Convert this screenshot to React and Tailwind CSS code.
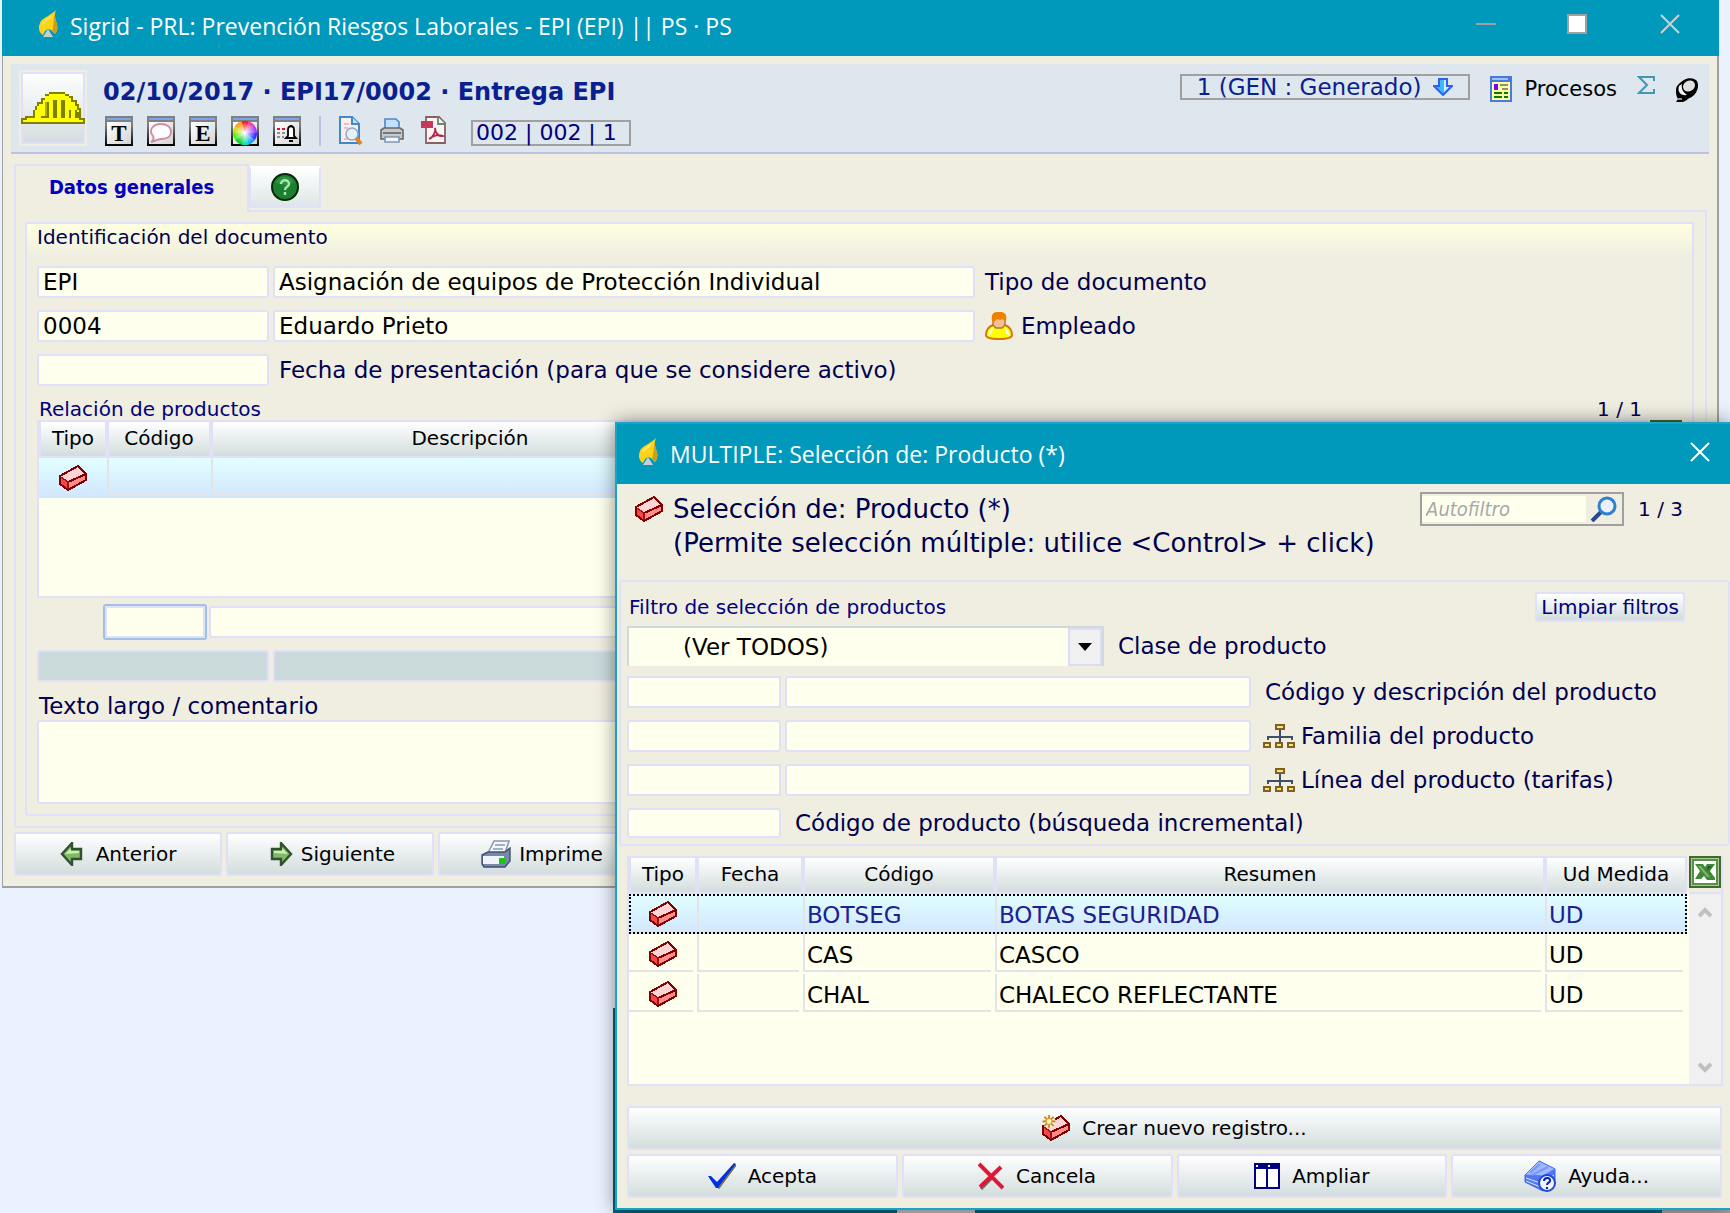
import React, {useState} from "react";

const products = [
    {code: "BOTSEG", summary: "BOTAS SEGURIDAD", unit: "UD"},
    {code: "CAS", summary: "CASCO", unit: "UD"},
    {code: "CHAL", summary: "CHALECO REFLECTANTE", unit: "UD"},
];

const fieldClass = "h-8 border-2 border-[#e0e0f8] rounded-[3px] bg-[#ffffee] px-1 text-[23px] text-black outline-none";
const buttonClass = "flex items-center justify-center border-2 border-[#e0e0f8] rounded-[3px] bg-linear-to-b from-white to-[#d3dddd] text-[20px] text-black";
const headClass = "h-[38px] p-0 pb-[2px] border-x-2 border-y-2 border-[#e0e0f8] bg-linear-to-b from-white to-[#d3dddd] text-[20px] font-normal text-black";
const rowSelected = "bg-linear-to-b from-[#e2ffff] to-[#d0e6fe] text-[#202090]";

/* ---------- icons ---------- */

const FlameIcon = () => (
    <svg className="w-5 h-7 shrink-0" viewBox="0 0 20 28" aria-hidden="true">
        <path d="M10 19L15 27H5Z" fill="#c9ced2"/>
        <path d="M18 0C16 5 17 8 19 14C20 18 19 22 17 24L13 20L10 19L7 21L5 25C0 22 0 16 3 11C7 7 13 5 18 0Z" fill="#ffd21a"/>
        <path d="M18 0C16 5 17 8 19 14C20 18 19 22 17 24L14 21C16 16 15 8 18 0Z" fill="#c8a020"/>
        <path d="M14 5C10 8 5 10 4 15L8 12C11 10 13 8 14 5Z" fill="#ffe870"/>
    </svg>
);

const EraserIcon = ({isNew}) => (
    <svg className="w-7 h-[26px] shrink-0" viewBox="0 0 14 13" shapeRendering="crispEdges" aria-hidden="true">
        <path d="M.5 5.5L9.5 .5L13.5 4.5L4.5 8.5Z" fill="#ffd4d4"/>
        <path d="M.5 5.5L4.5 8.5V12.5L.5 9.5Z" fill="#f04848"/>
        <path d="M4.5 8.5L13.5 4.5V7.5L4.5 12.5Z" fill="#ff8c8c"/>
        <path d="M.5 5.5L9.5 .5L13.5 4.5V7.5L4.5 12.5L.5 9.5ZM4.5 8.5L13.5 4.5" fill="none" stroke="#800000"/>
        <path d="M1 6L4.5 8.5V12" fill="none" stroke="#a01010" strokeWidth=".6"/>
        {isNew && (
            <g shapeRendering="auto">
                <circle cx="3.5" cy="3.2" r="3.2" fill="#f0eee1"/>
                <path d="M3.5 0V6.4M.3 3.2H6.7M1.2 .9L5.8 5.5M5.8 .9L1.2 5.5" stroke="#c87810" strokeWidth=".8"/>
                <circle cx="3.5" cy="3.2" r="1.5" fill="#fff8b0" stroke="#d89020" strokeWidth=".5"/>
            </g>
        )}
    </svg>
);

const HelmetIcon = () => (
    <svg className="w-16 h-8" viewBox="0 0 32 16" shapeRendering="crispEdges" aria-hidden="true">
        <path d="M0 16V13H2V12H6V9H7V7H8V5H10V3H12V1H14V0H22V1H24V2H26V4H28V6H29V8H30V13H32V16Z" fill="#808000"/>
        <path d="M1 15V14H3V13H7V9H8V7H9V6H11V4H12V2H14V1H22V2H24V3H25V5H27V7H28V9H29V14H31V15Z" fill="#ff0"/>
        <path d="M9 12H13V5H12V12Z" fill="#b0b000"/>
        <path d="M10 12H14V13H10ZM13 5H14V13H13ZM16 4H18V13H16ZM20 4H22V13H20ZM24 9H25V13H24ZM27 9H28V10H29V13H27Z" fill="#808000"/>
    </svg>
);

const ToolFrame = ({children}) => (
    <svg className="w-7 h-[30px]" viewBox="0 0 28 30" aria-hidden="true">
        <defs>
            <linearGradient id="toolbg" x1="0" y1="0" x2="1" y2="1">
                <stop offset="0" stopColor="#fff"/>
                <stop offset="1" stopColor="#d4d4d4"/>
            </linearGradient>
            <linearGradient id="toolline" x1="0" y1="0" x2="0" y2="1">
                <stop offset=".3" stopColor="#808080"/>
                <stop offset="1" stopColor="#000"/>
            </linearGradient>
        </defs>
        <rect width="28" height="30" fill="url(#toolline)"/>
        <rect x="2" y="2" width="24" height="2" fill="#78a4f0"/>
        <rect x="2" y="6" width="24" height="22" fill="url(#toolbg)"/>
        {children}
    </svg>
);

const TextToolIcon = ({letter}) => (
    <ToolFrame>
        <text x="14" y="25" textAnchor="middle" fontFamily="Liberation Serif, serif" fontWeight="bold" fontSize="23">{letter}</text>
    </ToolFrame>
);

const CommentIcon = () => (
    <ToolFrame>
        <path d="M14 8C20 8 24 11 24 16C24 21 19 23 14 23C11 23 9 25 4 26C7 24 7 22 6 20C1 14 6 8 14 8Z" fill="#fff" stroke="#d08c9c" strokeWidth="1.8"/>
    </ToolFrame>
);

const wheel = ["#f02020", "#f040b0", "#a040ff", "#3030ff", "#10a0ff", "#10e0b0", "#10d020", "#50f010", "#c0e010", "#ffa010"];

const ColorIcon = () => (
    <ToolFrame>
        <defs>
            <radialGradient id="wheelwhite">
                <stop offset="0" stopColor="#fff"/>
                <stop offset="1" stopColor="#fff" stopOpacity="0"/>
            </radialGradient>
        </defs>
        {wheel.map((color, i) => (
            <path key={color} d="M14 17L10 5.5A12 12 0 0 1 18 5.5Z" fill={color} transform={`rotate(${i * 36} 14 17)`}/>
        ))}
        <circle cx="14" cy="17" r="11" fill="url(#wheelwhite)"/>
    </ToolFrame>
);

const BellIcon = () => (
    <ToolFrame>
        <path d="M4 13H7M9 13H12" stroke="#e01030" strokeWidth="2"/>
        <path d="M4 17H7M9 17H12M4 21H7M9 21H11" stroke="#909090" strokeWidth="2"/>
        <path d="M13 22L15 20V14C15 9 21 9 21 14V20L23 22Z" fill="#fff" stroke="#000" strokeWidth="1.8"/>
        <path d="M16 25H20M18 9V11" stroke="#000" strokeWidth="1.8"/>
    </ToolFrame>
);

const PreviewIcon = () => (
    <svg className="w-6 h-[30px]" viewBox="0 0 24 30" aria-hidden="true">
        <path d="M1 1H13L20 8V27H1Z" fill="#fbeef0" stroke="#4088c8" strokeWidth="2"/>
        <path d="M13 1V8H20" fill="#c8e0f8" stroke="#4088c8" strokeWidth="2"/>
        <path d="M5 8H10M5 12H9M5 23H9" stroke="#e0b0b8" strokeWidth="1.5"/>
        <circle cx="13" cy="18" r="6" fill="#e4f0fa" stroke="#98a8c0" strokeWidth="1.6"/>
        <path d="M17 22L22 28" stroke="#d88828" strokeWidth="4"/>
    </svg>
);

const PrinterIcon = () => (
    <svg className="w-6 h-[26px]" viewBox="0 0 24 26" aria-hidden="true">
        <path d="M5 12V1H16L19 4V12Z" fill="#c4e0fa" stroke="#4888cc" strokeWidth="1.6"/>
        <path d="M1 12L4 10H20L23 12V21H1Z" fill="#c8c8c8" stroke="#686868" strokeWidth="1.6"/>
        <path d="M3 15H21" stroke="#787878" strokeWidth="2"/>
        <path d="M5 19H19V24H5Z" fill="#f4f8fc" stroke="#7898b8" strokeWidth="1.6"/>
    </svg>
);

const PdfIcon = () => (
    <svg className="w-[26px] h-[30px]" viewBox="0 0 26 30" aria-hidden="true">
        <path d="M5 1H18L24 7V27H5Z" fill="#fcf4f4" stroke="#886060" strokeWidth="1.8"/>
        <path d="M17 1V8H24" fill="#f4f8f4" stroke="#688868" strokeWidth="1.8"/>
        <rect y="5" width="12" height="7" fill="#c83858"/>
        <path d="M8 23C12 22 15 15 14 12C14 17 18 21 22 20C17 18 12 20 8 23Z" fill="none" stroke="#b02848" strokeWidth="1.8"/>
    </svg>
);

const DownArrowIcon = () => (
    <svg className="w-5 h-[18px]" viewBox="0 0 20 18" aria-hidden="true">
        <path d="M6 1H14V8H19L10 17L1 8H6Z" fill="#40b8ff" stroke="#3060f0" strokeWidth="2"/>
        <path d="M11 2H13V9H16L11 14Z" fill="#c8f4ff"/>
    </svg>
);

const ProcessIcon = () => (
    <svg className="w-[22px] h-[26px]" viewBox="0 0 11 13" shapeRendering="crispEdges" aria-hidden="true">
        <rect width="11" height="13" fill="#4878e0"/>
        <rect width="8" height="1" y="1" x="1" fill="#a0c0ff"/>
        <rect x="1" y="3" width="9" height="9" fill="#ffffa0"/>
        <rect x="2" y="4" width="2" height="3" fill="#8000ff"/>
        <path d="M5 4H9V5H5ZM6 6H9V7H6Z" fill="#909070"/>
        <path d="M2 8H6V9H2ZM7 8H9V9H7ZM2 10H6V11H2ZM7 10H9V11H7Z" fill="#008000"/>
    </svg>
);

const SigmaIcon = () => (
    <svg className="w-[18px] h-[18px]" viewBox="0 0 18 18" aria-hidden="true">
        <path d="M17 5V1H2L10 9L2 17H17V13" fill="none" stroke="#4098b8" strokeWidth="2"/>
    </svg>
);

const BallIcon = () => (
    <svg className="w-6 h-6" viewBox="0 0 24 24" aria-hidden="true">
        <path d="M1 12C1 7 6 4 9 2C13 -1 20 0 22 3C24 7 23 12 20 16C17 20 13 20 12 22L8 24H1L3 21C1 18 1 15 1 12Z" fill="#000"/>
        <ellipse cx="14" cy="8" rx="7" ry="6" fill="#e0e0e0" stroke="#000" strokeWidth="1.5" transform="rotate(-30 14 8)"/>
        <path d="M4 8C2 14 6 18 12 17C8 14 6 11 7 6Z" fill="#f4f4f4"/>
        <path d="M3 21H7" stroke="#909090" strokeWidth="2"/>
    </svg>
);

const HelpIcon = () => (
    <svg className="w-7 h-7" viewBox="0 0 28 28" aria-hidden="true">
        <circle cx="14" cy="14" r="13" fill="#1c8030" stroke="#082808" strokeWidth="2"/>
        <path d="M5 9C8 2 20 2 23 9C18 13 10 13 5 9Z" fill="#38a048" opacity=".6"/>
        <path d="M10 11C10 6 18 6 18 11C18 14 14 13 14 17M14 19V22" fill="none" stroke="#a8e8b0" strokeWidth="2.4"/>
    </svg>
);

const PersonIcon = () => (
    <svg className="w-7 h-7 shrink-0" viewBox="0 0 28 28" aria-hidden="true">
        <path d="M8 13C3 15 1 19 1 23C1 26 6 27 14 27C22 27 27 26 27 23C27 19 25 15 20 13Z" fill="#ff0" stroke="#d07818" strokeWidth="2"/>
        <path d="M3 24C4 20 6 17 8 15L7 21ZM25 24C24 20 22 17 20 15L21 21Z" fill="#fff"/>
        <path d="M8 6H20V13L17 16H11L8 13Z" fill="#f4c090" stroke="#b87028" strokeWidth="1.4"/>
        <path d="M7 9C6 3 8 0 12 0H17C21 1 22 4 21 9L17 7L15 8L12 7L9 10Z" fill="#f08000"/>
    </svg>
);

const TreeIcon = () => (
    <svg className="w-8 h-6 shrink-0" viewBox="0 0 32 24" shapeRendering="crispEdges" aria-hidden="true">
        <path d="M17 6V18M5 16V13H29V16" fill="none" stroke="#405068" strokeWidth="2"/>
        <g fill="#f8e870" stroke="#806028" strokeWidth="2">
            <rect x="13" y="1" width="8" height="4"/>
            <rect x="1" y="19" width="6" height="4"/>
            <rect x="13" y="19" width="6" height="4"/>
            <rect x="25" y="19" width="6" height="4"/>
        </g>
    </svg>
);

const GreenArrowIcon = ({flip}) => (
    <svg className={flip ? "w-7 h-6 -scale-x-100" : "w-7 h-6"} viewBox="0 0 28 24" aria-hidden="true">
        <path d="M2 12L12 1V7H21V17H12V23Z" fill="#80b868" stroke="#305030" strokeWidth="2.4"/>
        <path d="M5 12L11 6V9H19V11Z" fill="#c8f0b0"/>
    </svg>
);

const BigPrinterIcon = () => (
    <svg className="w-[30px] h-7" viewBox="0 0 30 28" aria-hidden="true">
        <path d="M7 13L13 1H28L24 13Z" fill="#f4f8fc" stroke="#8898b0" strokeWidth="1.6"/>
        <path d="M14 5H24M12 9H22" stroke="#8898b0" strokeWidth="1.4"/>
        <path d="M1 15L7 12H24L29 8V21L24 27H3L1 24Z" fill="#7888a8" stroke="#405070" strokeWidth="1.4"/>
        <path d="M2 16H23V24H2Z" fill="#f0f4fa"/>
        <rect x="18" y="18" width="6" height="6" fill="#18c818"/>
    </svg>
);

const CheckIcon = () => (
    <svg className="w-7 h-[26px]" viewBox="0 0 28 26" aria-hidden="true">
        <path d="M2 15L11 25L28 2" fill="none" stroke="#807020" strokeWidth="1.5"/>
        <path d="M0 13L3 13L9 19L26 0L28 1L10 25L8 25Z" fill="#0030e0"/>
    </svg>
);

const CrossIcon = () => (
    <svg className="w-[26px] h-7" viewBox="0 0 26 28" aria-hidden="true">
        <path d="M3 27L14 16" stroke="#707070" strokeWidth="3"/>
        <path d="M1 2L25 26M23 5L2 25" stroke="#e01838" strokeWidth="4"/>
    </svg>
);

const ColumnsIcon = () => (
    <svg className="w-[26px] h-[26px]" viewBox="0 0 13 13" shapeRendering="crispEdges" aria-hidden="true">
        <rect width="13" height="13" fill="#000080"/>
        <path d="M1 3H6V12H1ZM7 3H12V12H7ZM1 1H2V2H1ZM7 1H8V2H7Z" fill="#fff"/>
    </svg>
);

const BookIcon = () => (
    <svg className="w-8 h-8" viewBox="0 0 32 32" aria-hidden="true">
        <path d="M1 15L15 1L31 9V20L19 31L1 22Z" fill="#5078f0" stroke="#4060e8"/>
        <path d="M1 15L15 1L31 9L19 16Z" fill="#a0b8ff" stroke="#5078f8"/>
        <path d="M6 13L16 4M8 15L24 7" fill="none" stroke="#7898ff" strokeWidth="2"/>
        <path d="M2 18L19 24L30 15M2 21L19 28" fill="none" stroke="#d8e4ff"/>
        <circle cx="23" cy="23" r="8" fill="#f0f4ff" stroke="#2048d8" strokeWidth="2"/>
        <path d="M20 21C20 17 27 17 26 21C26 23 23 22 23 25M23 27V29" fill="none" stroke="#0020c0" strokeWidth="2"/>
    </svg>
);

const ExcelIcon = () => (
    <svg className="w-8 h-8" viewBox="0 0 32 32" aria-hidden="true">
        <rect x="1" y="1" width="30" height="30" fill="#a8cc98" stroke="#406830" strokeWidth="2"/>
        <rect x="4" y="4" width="24" height="24" fill="#fff" stroke="#589048" strokeWidth="2"/>
        <path d="M6 8H14L16 11L18 8H26L21 15L26 22V24H18L15 20L12 23H6L11 15Z" fill="#408838"/>
        <path d="M9 10L12 10L21 21L18 21Z" fill="#78b868"/>
        <path d="M19 10H23L18 15Z" fill="#206020"/>
    </svg>
);

const SearchIcon = () => (
    <svg className="w-7 h-[26px]" viewBox="0 0 28 26" aria-hidden="true">
        <path d="M2 25L12 15" stroke="#284890" strokeWidth="4"/>
        <circle cx="17" cy="10" r="8" fill="#e8f0fa" stroke="#3080d0" strokeWidth="3"/>
    </svg>
);

const CloseIcon = ({color}) => (
    <svg className="w-5 h-5" viewBox="0 0 20 20" aria-hidden="true">
        <path d="M1 1L19 19M19 1L1 19" stroke={color} strokeWidth="2"/>
    </svg>
);

const ChevronIcon = ({flip}) => (
    <svg className={flip ? "w-[14px] h-3 rotate-180" : "w-[14px] h-3"} viewBox="0 0 14 12" aria-hidden="true">
        <path d="M1 10L7 4L13 10" fill="none" stroke="#c0c0c0" strokeWidth="4"/>
    </svg>
);

/* ---------- main window ---------- */

const DocumentHeader = () => (
    <header className="flex items-start border-b-2 border-[#c0c0e4] bg-[#dde7ed] pl-2 pr-[10px]">
        <button aria-label="PRL" className="mt-[6px] mb-[6px] flex w-[68px] h-[76px] items-center justify-center border-2 border-[#f0eee1] bg-linear-to-b from-white to-[#d3dddd] shadow-[inset_0_0_0_2px_#e0e0f8]">
            <HelmetIcon/>
        </button>
        <div className="ml-4 pt-[13px]">
            <h1 className="text-[24px] leading-[30px] font-bold text-[#0a2090]">02/10/2017 · EPI17/0002 · Entrega EPI</h1>
            <div className="mt-[9px] ml-[2px] flex h-[30px] items-center">
                <div className="flex gap-[14px]">
                    <button aria-label="Texto"><TextToolIcon letter="T"/></button>
                    <button aria-label="Comentario"><CommentIcon/></button>
                    <button aria-label="Estado"><TextToolIcon letter="E"/></button>
                    <button aria-label="Color"><ColorIcon/></button>
                    <button aria-label="Avisos"><BellIcon/></button>
                </div>
                <div className="mx-[18px] h-[30px] w-[2px] bg-[#c0c0e4]"/>
                <div className="flex items-center gap-[17px]">
                    <button aria-label="Vista previa"><PreviewIcon/></button>
                    <button aria-label="Imprimir"><PrinterIcon/></button>
                    <button aria-label="PDF"><PdfIcon/></button>
                </div>
                <span className="ml-6 mt-1 flex h-[26px] items-center border-2 border-[#a0a0a0] pl-[3px] pr-3 text-[22px] leading-[26px] whitespace-pre text-[#000080]">002 | 002 | 1</span>
            </div>
        </div>
        <div className="ml-auto flex items-start pt-[10px]">
            <button className="flex h-[26px] items-center gap-3 border-2 border-[#a0a0a0] px-[15px] text-[23px] leading-[22px] text-[#0a2090]">
                1 (GEN : Generado)
                <DownArrowIcon/>
            </button>
            <button className="ml-5 mt-[2px] flex items-center gap-3 text-[21px] leading-[26px] text-black">
                <ProcessIcon/>
                Procesos
            </button>
            <button aria-label="Totales" className="ml-5 mt-[2px]"><SigmaIcon/></button>
            <button aria-label="Fijar" className="ml-5 mt-1"><BallIcon/></button>
        </div>
    </header>
);

const MainWindow = () => (
    <section className="absolute left-[2px] right-[11px] top-0">
        <div className="flex h-14 items-center bg-[#0099bc] pr-[39px] pb-2 pl-9 text-white">
            <FlameIcon/>
            <span className="ml-3 pt-1 font-['Open_Sans',sans-serif] text-[23px] leading-8">Sigrid - PRL: Prevención Riesgos Laborales - EPI (EPI) || PS · PS</span>
            <div className="ml-auto flex items-center">
                <button aria-label="Minimizar" className="h-[2px] w-5 bg-[#a0a0a0]"/>
                <button aria-label="Maximizar" className="ml-[71px] h-5 w-5 border-2 border-[#a0a0a0] bg-white"/>
                <button aria-label="Cerrar" className="ml-[73px]"><CloseIcon color="#d0d0d0"/></button>
            </div>
        </div>

        <div className="border-l border-r-2 border-b-2 border-[#a0a0a0] bg-[#f0eee1] px-2 pt-2 pb-[10px]">
            <DocumentHeader/>

            <div className="mt-[10px] ml-[3px] mr-[2px]">
                <div className="flex h-[46px] items-start" role="tablist">
                    <button role="tab" aria-selected="true" className="relative h-12 w-[235px] border-2 border-b-0 border-[#e0e0f8] bg-[#f0eee1] pb-1 font-['DejaVu_Sans_Condensed','DejaVu_Sans',sans-serif] text-[20px] font-bold text-[#0000c0]">
                        Datos generales
                    </button>
                    <button role="tab" aria-label="Ayuda" className="mt-[2px] h-[42px] w-[72px] border-2 border-[#e0e0f8] border-t-white bg-linear-to-b from-white to-[#dde7e7] flex items-center justify-center">
                        <HelpIcon/>
                    </button>
                </div>

                <div className="border-2 border-[#e0e0f8] rounded-b-[3px] pt-[10px] pb-[10px] pl-[9px] pr-[11px]">
                    <div className="border-2 border-[#e0e0f8] rounded-[3px] bg-[linear-gradient(to_bottom,#ffffe0,#f0eee1_32px)] px-[10px] pb-[10px]">
                        {/* Identificación */}
                        <h2 className="h-[26px] text-[20px] leading-[26px] text-[#000050]">Identificación del documento</h2>
                        <div className="mt-4 flex flex-col gap-3 text-[23px] leading-8 text-[#000050]">
                            <div className="flex items-center gap-1">
                                <input aria-label="Tipo" className={`${fieldClass} w-[232px]`} defaultValue="EPI"/>
                                <input id="tipo" className={`${fieldClass} w-[702px]`} defaultValue="Asignación de equipos de Protección Individual"/>
                                <label htmlFor="tipo" className="ml-[6px]">Tipo de documento</label>
                            </div>
                            <div className="flex items-center gap-1">
                                <input aria-label="Código de empleado" className={`${fieldClass} w-[232px]`} defaultValue="0004"/>
                                <input id="empleado" className={`${fieldClass} w-[702px]`} defaultValue="Eduardo Prieto"/>
                                <label htmlFor="empleado" className="ml-[6px] flex items-center gap-2"><PersonIcon/>Empleado</label>
                            </div>
                            <div className="flex items-center">
                                <input id="fecha" className={`${fieldClass} w-[232px]`}/>
                                <label htmlFor="fecha" className="ml-[10px]">Fecha de presentación (para que se considere activo)</label>
                            </div>
                        </div>

                        {/* Relación de productos */}
                        <div className="mt-3 flex h-[22px] items-center justify-between pl-[2px] pr-10 text-[20px] leading-[22px]">
                            <h2 className="text-[#000080]">Relación de productos</h2>
                            <span className="text-[#000050]">1 / 1</span>
                        </div>
                        <div className="flex gap-[2px]">
                            <div className="h-[178px] flex-1 border-2 border-t-0 border-[#e0e0f8] bg-[#ffffee]">
                                <table className="w-full table-fixed border-separate border-spacing-0">
                                    <thead>
                                    <tr>
                                        <th className={`${headClass} w-[68px]`}>Tipo</th>
                                        <th className={`${headClass} w-[104px]`}>Código</th>
                                        <th className={`${headClass} w-[518px]`}>Descripción</th>
                                        <th className={headClass}/>
                                    </tr>
                                    </thead>
                                    <tbody>
                                    <tr className={rowSelected}>
                                        <td className="h-10 p-0"><div className="flex justify-center"><EraserIcon/></div></td>
                                        <td className="h-10 p-0"><div className="mr-1 mb-[2px] h-[38px] border-l-2 border-b-2 border-[#e4e4e8]"/></td>
                                        <td className="h-10 p-0"><div className="mr-1 mb-[2px] h-[38px] border-l-2 border-b-2 border-[#e4e4e8]"/></td>
                                        <td className="h-10 p-0"/>
                                    </tr>
                                    </tbody>
                                </table>
                            </div>
                            <button aria-label="Excel" className="h-8"><ExcelIcon/></button>
                        </div>
                        <div className="mt-[6px] flex items-center gap-[2px] pl-[66px]">
                            <input aria-label="Código de línea" className="h-9 w-[104px] rounded-[3px] border-2 border-[#a0c0e4] bg-[#ffffee] px-1 shadow-[inset_0_0_0_2px_#e0e0f8] outline-none"/>
                            <input aria-label="Descripción de línea" className={`${fieldClass} flex-1`}/>
                        </div>
                        <div className="mt-[10px] flex gap-1">
                            <input aria-label="Referencia" disabled className="h-8 w-[232px] rounded-[3px] border-2 border-[#e0e0f8] bg-[#cadada]"/>
                            <input aria-label="Detalle" disabled className="h-8 flex-1 rounded-[3px] border-2 border-[#e0e0f8] bg-[#cadada]"/>
                        </div>
                        <label htmlFor="texto" className="mt-[10px] block h-7 pl-[2px] text-[23px] leading-7 text-[#000050]">Texto largo / comentario</label>
                        <textarea id="texto" className="block h-[84px] w-full resize-none rounded-[3px] border-2 border-[#e0e0f8] bg-[#ffffee] px-1 text-[23px] outline-none"/>
                    </div>
                </div>

                <div className="mt-1 flex gap-1">
                    <button className={`${buttonClass} h-11 w-[208px] gap-2`}><GreenArrowIcon/>Anterior</button>
                    <button className={`${buttonClass} h-11 w-[208px] gap-2`}><GreenArrowIcon flip/>Siguiente</button>
                    <button className={`${buttonClass} h-11 w-[208px] gap-2`}><BigPrinterIcon/>Imprime</button>
                </div>
            </div>
        </div>
    </section>
);

/* ---------- product picker ---------- */

const FilterRow = ({id, label, icon}) => (
    <div className="flex items-center gap-1">
        <input aria-label={`${label} (código)`} className={`${fieldClass} w-[154px]`}/>
        <input id={id} className={`${fieldClass} w-[466px]`}/>
        <label htmlFor={id} className={icon ? "ml-2 flex items-center gap-[6px]" : "ml-[10px]"}>
            {icon && <TreeIcon/>}
            {label}
        </label>
    </div>
);

const ProductTable = () => {

    const [selected, setSelected] = useState("BOTSEG");

    const cellClass = "mr-1 mb-[2px] h-[38px] border-b-2 border-l-2 border-[#e4e4e8] pl-[2px] leading-[42px]";

    return (
        <div className="mt-[10px] ml-[10px] mr-[7px] flex border-2 border-t-0 border-[#e0e0f8] bg-[#ffffee]">
            <div className="flex-1">
                <table className="w-full table-fixed border-separate border-spacing-0 text-[23px]">
                    <thead>
                    <tr>
                        <th className={`${headClass} w-[68px]`}>Tipo</th>
                        <th className={`${headClass} w-[106px]`}>Fecha</th>
                        <th className={`${headClass} w-[192px]`}>Código</th>
                        <th className={headClass}>Resumen</th>
                        <th className={`${headClass} w-[142px]`}>Ud Medida</th>
                    </tr>
                    </thead>
                    <tbody>
                    {products.map(item => (
                        <tr key={item.code}
                            onClick={() => setSelected(item.code)}
                            className={item.code === selected
                                ? `${rowSelected} outline-2 -outline-offset-2 outline-dotted outline-black`
                                : "text-black"}>
                            <td className="h-10 p-0">
                                <div className="mr-1 mb-[2px] flex h-[38px] items-center justify-center border-b-2 border-[#e4e4e8] pl-1 pt-1"><EraserIcon/></div>
                            </td>
                            <td className="h-10 p-0"><div className={cellClass}/></td>
                            <td className="h-10 p-0"><div className={cellClass}>{item.code}</div></td>
                            <td className="h-10 p-0"><div className={cellClass}>{item.summary}</div></td>
                            <td className="h-10 p-0"><div className={cellClass}>{item.unit}</div></td>
                        </tr>
                    ))}
                    </tbody>
                </table>
            </div>
            <div className="flex flex-col">
                <div className="h-9 bg-[#f0eee1] pl-[2px]">
                    <button aria-label="Excel" className="block"><ExcelIcon/></button>
                </div>
                <div className="ml-[2px] flex h-48 w-8 flex-col items-center justify-between border-t-2 border-[#e0e0f8] bg-[#f0f0f0] pt-3 pb-[10px]">
                    <button aria-label="Subir"><ChevronIcon/></button>
                    <button aria-label="Bajar"><ChevronIcon flip/></button>
                </div>
            </div>
        </div>
    );
};

const ProductDialog = () => (
    <section role="dialog" aria-label="Selección de: Producto" className="absolute left-[615px] right-0 top-[422px] border-2 border-r-0 border-[#18a4c4] bg-[#f0eee1] shadow-[0_0_18px_rgba(0,0,0,0.45)]">
        <div className="flex h-[60px] items-center bg-[#0099bc] pl-[21px] pr-5 pb-1 text-white">
            <FlameIcon/>
            <span className="ml-3 pt-1 font-['Open_Sans',sans-serif] text-[23px] leading-8">MULTIPLE: Selección de: Producto (*)</span>
            <button aria-label="Cerrar" className="ml-auto"><CloseIcon color="#fff"/></button>
        </div>

        <div className="flex items-start pt-2 pb-5 pl-[18px] pr-[47px] text-[#000050]">
            <div className="pt-1"><EraserIcon/></div>
            <h2 className="ml-[10px] text-[26px] leading-[34px]">
                Selección de: Producto (*)<br/>
                (Permite selección múltiple: utilice &lt;Control&gt; + click)
            </h2>
            <div className="ml-auto flex items-center text-[20px]">
                <div className="flex h-[34px] items-center border-2 border-[#a0a0a0]">
                    <input aria-label="Autofiltro" placeholder="Autofiltro" className="h-[26px] w-[164px] bg-[#ffffee] px-1 font-['DejaVu_Sans_Condensed','DejaVu_Sans',sans-serif] italic outline-none placeholder:text-[#a8a8a8]"/>
                    <button aria-label="Buscar" className="mx-1"><SearchIcon/></button>
                </div>
                <span className="ml-[14px]">1 / 3</span>
            </div>
        </div>

        {/* Filtros */}
        <div className="ml-[2px] border-2 border-[#e0e0f8] rounded-[3px] pt-[10px] pb-[6px] pl-[6px] text-[23px] leading-8 text-[#000050]">
            <div className="flex items-center justify-between pl-[2px] pr-[43px] text-[20px] leading-[30px] text-[#000080]">
                <h3>Filtro de selección de productos</h3>
                <button className="h-[30px] rounded-[3px] border-2 border-[#e0e0f8] bg-linear-to-b from-white to-[#d3dddd] px-1 leading-[26px]">Limpiar filtros</button>
            </div>
            <div className="mt-1 flex items-center">
                <div className="relative">
                    <select id="clase" className="block h-10 w-[477px] appearance-none border-2 border-b-0 border-[#d0dadc] bg-[#ffffee] pl-[54px] text-black outline-none">
                        <option>(Ver TODOS)</option>
                    </select>
                    <span className="pointer-events-none absolute top-[2px] right-[2px] flex h-[38px] w-[34px] items-center justify-center border-2 border-[#dcdcf8] bg-[#f0f0f0]">
                        <svg className="h-2 w-[14px]" viewBox="0 0 14 8" aria-hidden="true"><path d="M0 0H14L7 8Z" fill="#000"/></svg>
                    </span>
                </div>
                <label htmlFor="clase" className="ml-[14px]">Clase de producto</label>
            </div>
            <div className="mt-[10px] flex flex-col gap-3">
                <FilterRow id="codigo" label="Código y descripción del producto"/>
                <FilterRow id="familia" label="Familia del producto" icon/>
                <FilterRow id="linea" label="Línea del producto (tarifas)" icon/>
                <div className="flex h-[30px] items-center">
                    <input id="busqueda" className="h-[30px] w-[154px] rounded-[3px] border-2 border-[#e0e0f8] bg-[#ffffee] px-1 outline-none"/>
                    <label htmlFor="busqueda" className="ml-[14px]">Código de producto (búsqueda incremental)</label>
                </div>
            </div>
        </div>

        <ProductTable/>

        <div className="mt-5 mb-[10px] ml-[10px] mr-2 flex flex-col gap-1">
            <button className={`${buttonClass} h-11 gap-3`}><EraserIcon isNew/>Crear nuevo registro...</button>
            <div className="grid grid-cols-4 gap-1">
                <button className={`${buttonClass} h-11 gap-3`}><CheckIcon/>Acepta</button>
                <button className={`${buttonClass} h-11 gap-3`}><CrossIcon/>Cancela</button>
                <button className={`${buttonClass} h-11 gap-3`}><ColumnsIcon/>Ampliar</button>
                <button className={`${buttonClass} h-11 gap-3`}><BookIcon/>Ayuda...</button>
            </div>
        </div>
    </section>
);

export default function App() {
    return (
        <main className="relative min-h-screen overflow-hidden bg-[#eaf2ff] font-['DejaVu_Sans',Verdana,sans-serif]">
            <MainWindow/>
            {/* window that peeks out below the dialog */}
            <div className="absolute left-[613px] right-0 top-[1008px] bottom-0 flex items-end justify-between bg-[#006678] pl-[284px]">
                <div className="h-[3px] w-[78px] bg-[#c0c0c0]"/>
                <div className="h-[3px] w-[68px] bg-[#a8a8a8]"/>
            </div>
            <ProductDialog/>
        </main>
    );
}
